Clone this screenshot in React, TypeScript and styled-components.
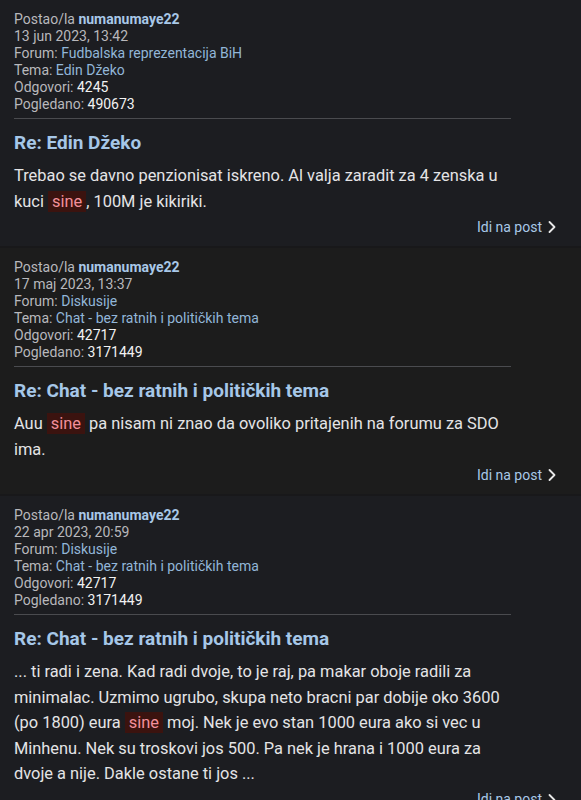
import React from "react";
import styled, { createGlobalStyle } from "styled-components";
import { ChevronRight } from "lucide-react";

const Global = createGlobalStyle`
  html, body { margin: 0; padding: 0; background: #18181a; }
  body { font-family: Roboto, "Noto Sans", "Liberation Sans", sans-serif; -webkit-font-smoothing: antialiased; }
`;

const List = styled.div`
  display: flex;
  flex-direction: column;
  gap: 2px;
`;

const Card = styled.section<{ $alt?: boolean }>`
  background: ${(p) => (p.$alt ? "#1c1c1c" : "#1c1d21")};
  padding: 11px 0 9px 14px;
  display: flex;
  flex-direction: column;
`;

const Meta = styled.div`
  width: 497px;
  font-size: 14px;
  line-height: 17px;
  color: #b8b8bc;
  padding-bottom: 5px;
  border-bottom: 1px solid #4a4b4f;
`;

const MetaLine = styled.div``;

const User = styled.span`
  font-weight: 700;
  color: #a9c8e8;
`;

const MetaLink = styled.span`
  color: #92b6d8;
`;

const Num = styled.span`
  color: #f2f2f2;
`;

const Title = styled.h2`
  margin: 10px 0 0;
  font-size: 19px;
  line-height: 28px;
  font-weight: 700;
  color: #a6c7e8;
`;

const Body = styled.p`
  margin: 6px 0 0;
  width: 497px;
  font-size: 16.4px;
  line-height: 25.5px;
  color: #e4e4e6;
`;

const Hl = styled.span`
  background: #3b130f;
  color: #f2909b;
  padding: 1px 4px;
`;

const Footer = styled.div`
  margin-top: 3px;
  display: flex;
  justify-content: flex-end;
  align-items: center;
  padding-right: 19px;
  font-size: 14px;
  line-height: 17px;
  color: #a9c8e8;
`;

const Chevron = styled(ChevronRight)`
  color: #e8e8e8;
  flex: none;
`;

type Post = {
  date: string;
  forum: string;
  topic: string;
  replies: string;
  views: string;
  body: React.ReactNode;
};

const posts: Post[] = [
  {
    date: "13 jun 2023, 13:42",
    forum: "Fudbalska reprezentacija BiH",
    topic: "Edin Džeko",
    replies: "4245",
    views: "490673",
    body: (
      <>
        Trebao se davno penzionisat iskreno. Al valja zaradit za 4 zenska u kuci <Hl>sine</Hl>, 100M je kikiriki.
      </>
    ),
  },
  {
    date: "17 maj 2023, 13:37",
    forum: "Diskusije",
    topic: "Chat - bez ratnih i političkih tema",
    replies: "42717",
    views: "3171449",
    body: (
      <>
        Auu <Hl>sine</Hl> pa nisam ni znao da ovoliko pritajenih na forumu za SDO ima.
      </>
    ),
  },
  {
    date: "22 apr 2023, 20:59",
    forum: "Diskusije",
    topic: "Chat - bez ratnih i političkih tema",
    replies: "42717",
    views: "3171449",
    body: (
      <>
        ... ti radi i zena. Kad radi dvoje, to je raj, pa makar oboje radili za minimalac. Uzmimo ugrubo, skupa neto
        bracni par dobije oko 3600 (po 1800) eura <Hl>sine</Hl> moj. Nek je evo stan 1000 eura ako si vec u Minhenu.
        Nek su troskovi jos 500. Pa nek je hrana i 1000 eura za dvoje a nije. Dakle ostane ti jos ...
      </>
    ),
  },
];

export default function App() {
  return (
    <>
      <Global />
      <List>
        {posts.map((p, i) => (
          <Card key={i} $alt={i % 2 === 1}>
            <Meta>
              <MetaLine>
                Postao/la <User>numanumaye22</User>
              </MetaLine>
              <MetaLine>{p.date}</MetaLine>
              <MetaLine>
                Forum: <MetaLink>{p.forum}</MetaLink>
              </MetaLine>
              <MetaLine>
                Tema: <MetaLink>{p.topic}</MetaLink>
              </MetaLine>
              <MetaLine>
                Odgovori: <Num>{p.replies}</Num>
              </MetaLine>
              <MetaLine>
                Pogledano: <Num>{p.views}</Num>
              </MetaLine>
            </Meta>
            <Title>Re: {p.topic}</Title>
            <Body>{p.body}</Body>
            <Footer>
              Idi na post
              <Chevron size={20} strokeWidth={2.2} />
            </Footer>
          </Card>
        ))}
      </List>
    </>
  );
}
